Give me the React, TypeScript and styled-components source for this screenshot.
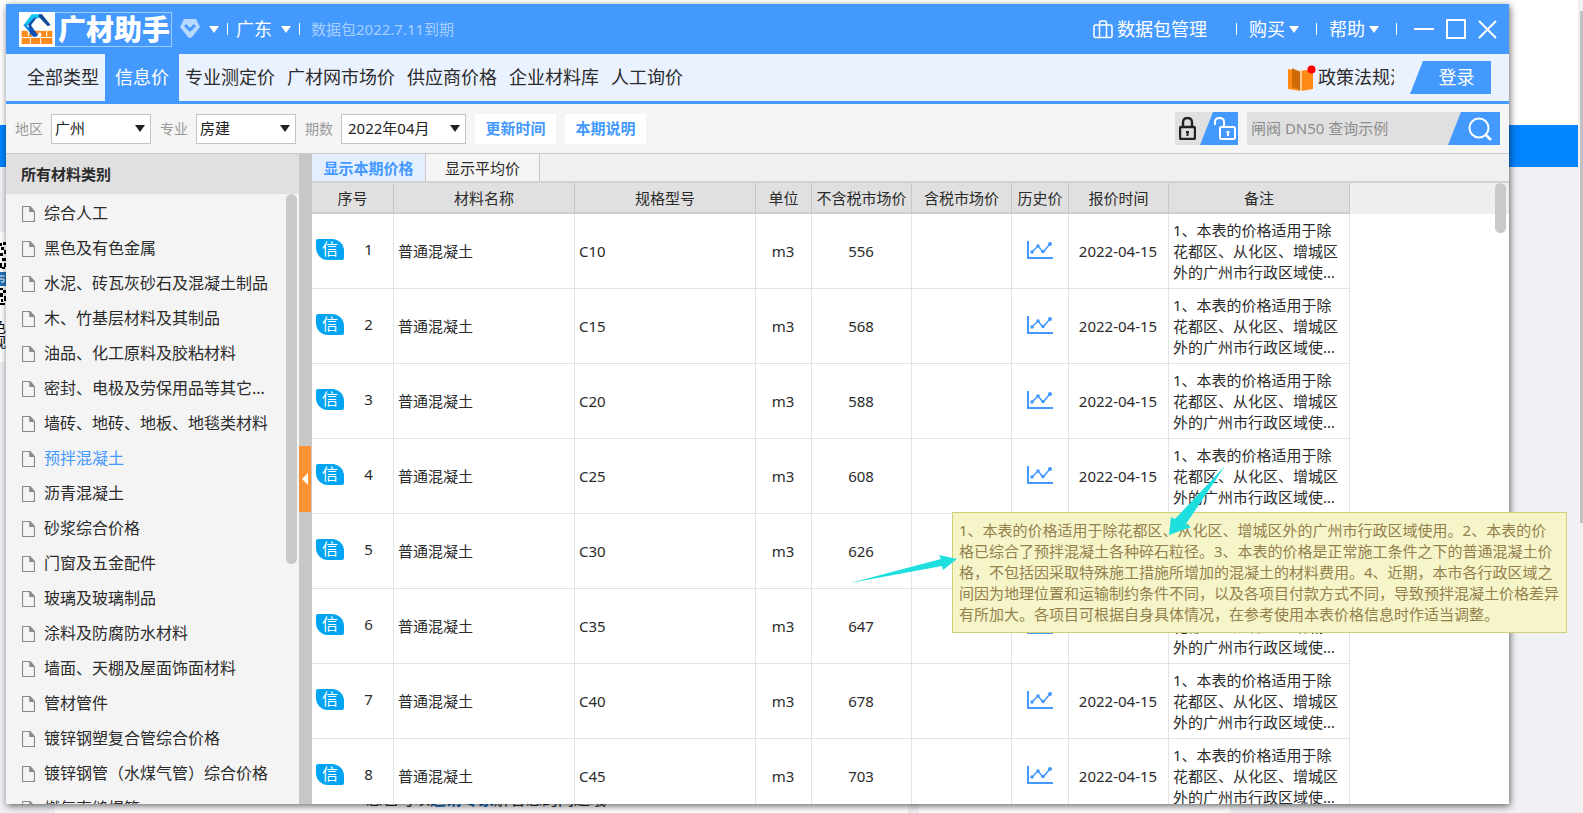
import React from "react";
import styled, { createGlobalStyle, css } from "styled-components";

const BLUE = "#4499ff";

const GlobalStyle = createGlobalStyle`
  *, *::before, *::after { box-sizing: border-box; }
  body {
    margin: 0;
    font-family: "Noto Sans", "Noto Sans CJK SC", sans-serif;
    font-size: 15px;
    line-height: 21px;
    color: #2b2b2b;
    background: #eff1f4;
  }
  button, input, select { font: inherit; color: inherit; margin: 0; border: 0; padding: 0; border-radius: 0; background: none; }
  button { cursor: pointer; white-space: nowrap; }
`;

const Page = styled.div`
  position: relative;
  height: 100vh;
  padding: 4px 74px 9px 6px;
  overflow: hidden;
`;

/* ---------- web page behind the window ---------- */

const Backdrop = styled.div`
  position: absolute;
  inset: 0;
  display: flex;
  flex-direction: column;
`;

const BackTop = styled.div`
  flex: 0 0 125px;
  background: #fff;
`;

const BackBand = styled.div`
  flex: 0 0 42px;
  background: #0084ff;
`;

const BackBody = styled.div`
  flex: 1;
  display: flex;
  flex-direction: column;
  justify-content: space-between;
  padding-top: 65px;
`;

const QrCard = styled.div`
  width: 60px;
  height: 130px;
  background: #fff;
  svg { display: block; }
`;

const QrCaption = styled.div`
  width: 6px;
  overflow: hidden;
  display: flex;
  flex-direction: column;
  align-items: flex-end;
  font-size: 14px;
  line-height: 15px;
  padding-top: 6px;
  color: #000;
`;

const BackCards = styled.div`
  display: flex;
  gap: 11px;
  height: 24px;
  padding-left: 55px;
`;

const BackCard = styled.p<{ $width: number }>`
  width: ${(p) => p.$width}px;
  margin: 0;
  padding-left: 311px;
  background: #fff;
  font-size: 16px;
  line-height: 20px;
  white-space: nowrap;
  a { color: #0a66c2; font-weight: 700; text-decoration: none; }
`;

const BackScroll = styled.div`
  position: absolute;
  inset: 0 0 0 auto;
  width: 5px;
  padding: 11px 0 0 2px;
  background: #f1f1f1;
  &::before { content: ""; display: block; height: 512px; background: #c1c1c1; }
`;

/* ---------- window ---------- */

const Window = styled.div`
  position: relative;
  display: flex;
  flex-direction: column;
  height: 100%;
  background: #fff;
  box-shadow: 1px 2px 7px rgba(0, 0, 0, 0.6);
`;

const TitleBar = styled.header`
  flex: 0 0 50px;
  display: flex;
  align-items: center;
  justify-content: space-between;
  padding: 0 12px 0 13px;
  background: ${BLUE};
  color: #fff;
  font-size: 18px;
`;

const BarGroup = styled.div<{ $gap: number }>`
  display: flex;
  align-items: center;
  gap: ${(p) => p.$gap}px;
`;

const Brand = styled.h1`
  display: flex;
  align-items: center;
  height: 35px;
  margin: 0;
  padding-right: 1px;
  border: 1px solid #9fcbff;
  font-size: 28px;
  line-height: 32px;
  font-weight: 900;
  svg { display: block; margin: -1px 3px -1px -1px; }
`;

const BarButton = styled.button<{ $menu?: number }>`
  display: flex;
  align-items: center;
  gap: ${(p) => p.$menu ?? 4}px;
`;

const RightMenu = styled(BarButton)`
  padding-right: 5px;
`;

const WindowButtons = styled.div`
  display: flex;
  align-items: center;
  gap: 12px;
  padding-left: 5px;
`;

const Divider = styled.span`
  width: 1px;
  height: 12px;
  background: #fff;
`;

const Expiry = styled.span`
  padding-left: 3px;
  font-size: 15px;
  color: #a6cfff;
`;

const NavBar = styled.nav`
  flex: 0 0 50px;
  display: flex;
  align-items: stretch;
  padding: 0 18px 0 15px;
  background: #ebf2ff;
  border-bottom: 3px solid ${BLUE};
  font-size: 18px;
`;

const NavItem = styled.button<{ $active?: boolean }>`
  padding: 0 6px;
  ${(p) =>
    p.$active &&
    css`
      padding: 0 10px;
      background: ${BLUE};
      color: #fff;
    `}
`;

const Policy = styled.a`
  display: flex;
  align-items: center;
  gap: 2px;
  width: 106px;
  margin: 0 16px 0 auto;
  overflow: hidden;
  white-space: nowrap;
  color: inherit;
  text-decoration: none;
  svg { flex: none; }
`;

const LoginButton = styled.button`
  align-self: center;
  width: 81px;
  height: 33px;
  padding-left: 12px;
  background: ${BLUE};
  color: #fff;
  clip-path: polygon(13px 0, 100% 0, 100% 100%, 0 100%);
`;

const FilterBar = styled.div`
  flex: 0 0 50px;
  display: flex;
  align-items: center;
  gap: 9px;
  padding: 0 9px;
  background: #f5f5f5;
  border-bottom: 1px solid #c8c8c8;
`;

const Field = styled.label`
  display: flex;
  align-items: center;
  gap: 8px;
  font-size: 14px;
  color: #999;
`;

const SelectBox = styled.span<{ $width: number }>`
  position: relative;
  width: ${(p) => p.$width}px;
  select {
    appearance: none;
    display: block;
    width: 100%;
    height: 30px;
    padding-left: ${(p) => (p.$width > 100 ? 6 : 3)}px;
    border: 1px solid #c4c4c4;
    background: #fff;
    font-size: 15px;
    color: #222;
  }
  svg { position: absolute; right: 6px; top: 11px; pointer-events: none; }
`;

const LinkButton = styled.button`
  width: 81px;
  height: 30px;
  background: #fff;
  color: ${BLUE};
  font-weight: 700;
`;

const LockSwitch = styled.div`
  display: flex;
  justify-content: space-between;
  width: 63px;
  height: 33px;
  margin-left: auto;
  background: #e0e0e0;
`;

const LockButton = styled.button<{ $on?: boolean }>`
  display: flex;
  align-items: center;
  justify-content: center;
  width: ${(p) => (p.$on ? 38 : 25)}px;
  ${(p) =>
    p.$on &&
    css`
      justify-content: flex-end;
      padding-right: 2px;
      background: ${BLUE};
      clip-path: polygon(13px 0, 100% 0, 100% 100%, 0 100%);
    `}
`;

const SearchBox = styled.form`
  display: flex;
  width: 253px;
  height: 33px;
  background: #e0e0e0;
  input {
    flex: 1;
    min-width: 0;
    padding-left: 4px;
    &::placeholder { color: #8c8c8c; opacity: 1; }
  }
`;

const SearchButton = styled.button`
  display: flex;
  align-items: center;
  justify-content: center;
  width: 52px;
  padding-left: 12px;
  background: ${BLUE};
  clip-path: polygon(13px 0, 100% 0, 100% 100%, 0 100%);
`;

const Body = styled.div`
  flex: 1;
  min-height: 0;
  display: flex;
`;

const Sidebar = styled.aside`
  position: relative;
  flex: 0 0 293px;
  overflow: hidden;
  background: #f4f4f4;
`;

const SidebarTitle = styled.h2`
  margin: 0;
  height: 40px;
  padding: 10px 0 0 15px;
  background: #e0e0e0;
  font-size: 15px;
  line-height: 21px;
  font-weight: 700;
`;

const CategoryList = styled.ul`
  margin: 0;
  padding: 2px 0 0;
  list-style: none;
`;

const Category = styled.button<{ $active?: boolean }>`
  display: flex;
  align-items: center;
  gap: 9px;
  width: 100%;
  height: 35px;
  padding-left: 16px;
  font-size: 16px;
  color: ${(p) => (p.$active ? BLUE : "#2b2b2b")};
`;

const ScrollThumb = styled.div<{ $height: number; $top: number; $right: number }>`
  position: absolute;
  top: ${(p) => p.$top}px;
  right: ${(p) => p.$right}px;
  width: 11px;
  height: ${(p) => p.$height}px;
  border-radius: 6px;
  background: #c9c9c9;
`;

const Splitter = styled.div`
  flex: 0 0 13px;
  display: flex;
  align-items: center;
  background: #c8c7c5;
`;

const CollapseButton = styled.button`
  display: flex;
  align-items: center;
  justify-content: center;
  width: 12px;
  height: 66px;
  background: #ff9233;
`;

const Main = styled.main`
  position: relative;
  flex: 1;
  min-width: 0;
  overflow: hidden;
`;

const Tabs = styled.div`
  display: flex;
  height: 29px;
  background: #f0f0f0;
  border-bottom: 2px solid #d2d2d2;
`;

const Tab = styled.button<{ $active?: boolean }>`
  width: 114px;
  padding-top: 2px;
  border-right: 1px solid #c8c8c8;
  background: ${(p) => (p.$active ? "#e3efff" : "#f5f5f5")};
  color: ${(p) => (p.$active ? BLUE : "inherit")};
  font-weight: ${(p) => (p.$active ? 700 : 400)};
`;

const PriceTable = styled.table`
  width: 100%;
  table-layout: fixed;
  border-collapse: separate;
  border-spacing: 0;
`;

const HeadCell = styled.th<{ $width?: number }>`
  width: ${(p) => (p.$width ? `${p.$width}px` : "auto")};
  height: 31px;
  padding: 2px 0 0;
  font-weight: 400;
  white-space: nowrap;
  background: ${(p) => (p.$width ? "#e0e0e0" : "#efefef")};
  ${(p) =>
    p.$width &&
    css`
      border-right: 1px solid #c6c6c6;
      border-bottom: 2px solid #cfcfcf;
    `}
`;

const Cell = styled.td<{ $center?: boolean }>`
  height: 75px;
  padding: 0 5px 0 4px;
  text-align: ${(p) => (p.$center ? "center" : "left")};
  border-right: 1px solid #e4e4e4;
  border-bottom: 1px solid #e2e2e2;
  white-space: ${(p) => (p.$center ? "nowrap" : "normal")};
  > svg { display: block; margin: 0 auto; }
`;

const IndexCell = styled(Cell)`
  padding: 0 0 3px 4px;
`;

const FillerCell = styled.td`
  padding: 0;
`;

const IndexBox = styled.div`
  display: flex;
  align-items: center;
  text-align: center;
  span { flex: 1; }
`;

const Badge = styled.b`
  width: 28px;
  height: 21px;
  border-radius: 2px 12px 2px 12px;
  background: #00a4f0;
  color: #fff;
  font-size: 16px;
  font-weight: 400;
`;

const Note = styled.div`
  display: -webkit-box;
  -webkit-box-orient: vertical;
  -webkit-line-clamp: 3;
  overflow: hidden;
`;

const Tooltip = styled.div`
  position: absolute;
  left: 952px;
  top: 512px;
  width: 615px;
  padding: 7px 0 7px 6px;
  border: 1px solid #cfcf74;
  background: #f5f5c9;
  color: #94804c;
  white-space: pre;
`;

const Pointers = styled.svg`
  position: absolute;
  left: 0;
  top: 0;
  pointer-events: none;
`;

/* ---------- icons ---------- */

const Caret = ({ color = "#fff" }: { color?: string }) => (
  <svg width="10" height="7" viewBox="0 0 10 7" aria-hidden="true">
    <path d="M0 0h10L5 7z" fill={color} />
  </svg>
);

const LogoMark = () => (
  <svg width="36" height="35" viewBox="0 0 108 105" aria-hidden="true">
    <path d="M0 0h108v105H0z" fill="#fff" />
    <path d="M8 56h92v19H8zM8 78h92v18H8z" fill="#ff8a1c" />
    <path d="M34 78v18M65 78v18M83 57v18M28 56v18" stroke="#fff" strokeWidth="3" />
    <path d="M24 38L52 70l14-12-10-12 20 0 2 9-14 21H42L12 44z" fill="#fff" />
    <path d="M62 57h18L69 71z" fill="#ff8a1c" />
    <path d="M38 7h30l-8 12H44L28 38l-15 2z" fill="#12c4f0" />
    <path d="M13 39l15-2 9-12 11-9-24 26 34 27-6 5H43z" fill="#1787e8" />
    <path d="M28 37l16-18 10-3-18 24 20 29-8 5-14-6z" fill="#0d4fae" />
    <path d="M60 7h9l26 32-9 4-27-29z" fill="#124a98" />
  </svg>
);

const GemIcon = () => (
  <svg width="20" height="20" viewBox="0 0 20 20" aria-hidden="true">
    <path d="M4 0h12l4 8-8 10q-2 2-4 0L0 8z" fill="#b9d9ff" />
    <path d="M5 6l5 5 5-5" fill="none" stroke={BLUE} strokeWidth="3" />
  </svg>
);

const CaseIcon = () => (
  <svg width="20" height="19" viewBox="0 0 20 19" fill="none" stroke="#fff" strokeWidth="1.5" aria-hidden="true">
    <rect x="1" y="5" width="18" height="12.5" rx="1.5" />
    <path d="M6.5 17.5V3q0-2 2-2h3q2 0 2 2v14.5" />
  </svg>
);

const BookIcon = () => (
  <svg width="28" height="26" viewBox="0 0 28 26" aria-hidden="true">
    <path d="M0 4l12 2 13-2v20l-12 2-13-2z" fill="#ff8a14" />
    <path d="M4 3l8 4v18l-8-3z" fill="#cf6a08" />
    <path d="M13 6v20" stroke="#ffe0b8" strokeWidth="1.5" />
    <circle cx="23.5" cy="4.5" r="4" fill="#f00" />
  </svg>
);

const LockIcon = ({ open, color }: { open?: boolean; color: string }) => (
  <svg width={open ? 22 : 17} height="23" viewBox={open ? "0 0 22 23" : "0 0 17 23"} fill="none" stroke={color} strokeWidth="2" aria-hidden="true">
    {open ? (
      <>
        <path d="M1 8V5q0-4 4.500-4T10 5v5" />
        <rect x="6" y="10" width="15" height="12" rx="1.5" />
        <path d="M14 14v5M12.500 15h3" />
      </>
    ) : (
      <>
        <path d="M4 10V5.500q0-4.500 4.500-4.500T13 5.500V10" strokeWidth="2.4" />
        <rect x="1" y="10" width="15" height="12" rx="1.5" strokeWidth="2.4" />
        <path d="M8.500 14v5M7 15h3" />
      </>
    )}
  </svg>
);

const SearchIcon = () => (
  <svg width="24" height="24" viewBox="0 0 24 24" fill="none" stroke="#fff" strokeWidth="2" aria-hidden="true">
    <circle cx="11" cy="11" r="9.5" />
    <path d="M18 18l5 5" strokeWidth="2.5" />
  </svg>
);

const MinimizeIcon = () => (
  <svg width="20" height="20" viewBox="0 0 20 20" stroke="#fff" strokeWidth="2" aria-hidden="true">
    <path d="M0 10h20" />
  </svg>
);

const MaximizeIcon = () => (
  <svg width="20" height="20" viewBox="0 0 20 20" fill="none" stroke="#fff" strokeWidth="2" aria-hidden="true">
    <rect x="1" y="1" width="18" height="18" />
  </svg>
);

const CloseIcon = () => (
  <svg width="19" height="19" viewBox="0 0 19 19" stroke="#fff" strokeWidth="2" aria-hidden="true">
    <path d="M1 1l17 17M18 1L1 18" />
  </svg>
);

const FileIcon = () => (
  <svg width="13" height="16" viewBox="0 0 13 16" fill="none" stroke="#8a8a8a" aria-hidden="true">
    <path d="M.5.5h7.500l4.500 5v10H.5zM8 .5v5h4.500" strokeWidth="1.2" />
    <path d="M8 1l4 4.500H8z" fill="#8a8a8a" />
  </svg>
);

const ChartIcon = () => (
  <svg width="26" height="20" viewBox="0 0 26 20" fill="none" stroke={BLUE} aria-hidden="true">
    <path d="M1 0v17h25" strokeWidth="2" />
    <path d="M5 11l6-6 5 6 7-8" strokeWidth="1.5" />
    <g fill={BLUE} stroke="none">
      <circle cx="5" cy="11" r="1.8" />
      <circle cx="11" cy="5" r="1.8" />
      <circle cx="16" cy="10.5" r="1.8" />
      <circle cx="23" cy="3" r="2" />
    </g>
  </svg>
);

const QrEdge = () => (
  <svg width="6" height="81" viewBox="0 0 6 81" aria-hidden="true">
    <path d="M0 11h2v3H0zM3 10h3v3H3zM1 15h3v3H1zM4 18h2v4H4zM0 21h3v3H0zM2 26h4v3H2zM0 31h2v5H0zM4 31h2v4H4zM2 35h3v2H2zM0 56h3v2H0zM3 58h3v3H3zM0 61h3v4H0zM4 64h2v5H4zM1 67h2v3H1zM0 71h5v2H0z" fill="#000" />
    <path d="M0 40h6v14H0z" fill="#1f6fb8" />
    <path d="M0 44h5M1 50h3v-3H0" stroke="#fff" fill="none" />
  </svg>
);

/* ---------- data ---------- */

const NAV = ["全部类型", "信息价", "专业测定价", "广材网市场价", "供应商价格", "企业材料库", "人工询价"];

const CATEGORIES = [
  "综合人工",
  "黑色及有色金属",
  "水泥、砖瓦灰砂石及混凝土制品",
  "木、竹基层材料及其制品",
  "油品、化工原料及胶粘材料",
  "密封、电极及劳保用品等其它...",
  "墙砖、地砖、地板、地毯类材料",
  "预拌混凝土",
  "沥青混凝土",
  "砂浆综合价格",
  "门窗及五金配件",
  "玻璃及玻璃制品",
  "涂料及防腐防水材料",
  "墙面、天棚及屋面饰面材料",
  "管材管件",
  "镀锌钢塑复合管综合价格",
  "镀锌钢管（水煤气管）综合价格",
  "燃气直缝焊管",
];

const COLUMNS: [string, number][] = [
  ["序号", 82],
  ["材料名称", 181],
  ["规格型号", 181],
  ["单位", 56],
  ["不含税市场价", 100],
  ["含税市场价", 100],
  ["历史价", 57],
  ["报价时间", 100],
  ["备注", 181],
];

const ROWS: [string, number][] = [
  ["C10", 556],
  ["C15", 568],
  ["C20", 588],
  ["C25", 608],
  ["C30", 626],
  ["C35", 647],
  ["C40", 678],
  ["C45", 703],
];

const NOTE_LINES = [
  "1、本表的价格适用于除花都区、从化区、增城区外的广州市行政区域使用。2、本表的价",
  "格已综合了预拌混凝土各种碎石粒径。3、本表的价格是正常施工条件之下的普通混凝土价",
  "格，不包括因采取特殊施工措施所增加的混凝土的材料费用。4、近期，本市各行政区域之",
  "间因为地理位置和运输制约条件不同，以及各项目付款方式不同，导致预拌混凝土价格差异",
  "有所加大。各项目可根据自身具体情况，在参考使用本表价格信息时作适当调整。",
];

const FILTERS: [string, string, number][] = [
  ["地区", "广州", 100],
  ["专业", "房建", 100],
  ["期数", "2022年04月", 125],
];

/* ---------- page ---------- */

export default function App() {
  return (
    <Page>
      <GlobalStyle />
      <Backdrop>
        <BackTop />
        <BackBand />
        <BackBody>
          <QrCard>
            <QrEdge />
            <QrCaption>
              <span>色</span>
              <span>视</span>
            </QrCaption>
          </QrCard>
          <BackCards>
            <BackCard $width={853}>
              您也可以<a href="#expert">邀请专家</a>解答您的问题哦
            </BackCard>
            <BackCard $width={278} />
          </BackCards>
        </BackBody>
        <BackScroll />
      </Backdrop>

      <Window>
        <TitleBar>
          <BarGroup $gap={8}>
            <Brand>
              <LogoMark />
              广材助手
            </Brand>
            <BarButton $menu={9} aria-label="会员">
              <GemIcon />
              <Caret />
            </BarButton>
            <Divider />
            <BarButton $menu={9}>
              广东
              <Caret />
            </BarButton>
            <Divider />
            <Expiry>数据包2022.7.11到期</Expiry>
          </BarGroup>
          <BarGroup $gap={12}>
            <RightMenu>
              <CaseIcon />
              数据包管理
            </RightMenu>
            <span />
            <Divider />
            <RightMenu>
              购买
              <Caret />
            </RightMenu>
            <Divider />
            <RightMenu>
              帮助
              <Caret />
            </RightMenu>
            <Divider />
            <WindowButtons>
              <BarButton aria-label="最小化">
                <MinimizeIcon />
              </BarButton>
              <BarButton aria-label="最大化">
                <MaximizeIcon />
              </BarButton>
              <BarButton aria-label="关闭">
                <CloseIcon />
              </BarButton>
            </WindowButtons>
          </BarGroup>
        </TitleBar>

        <NavBar>
          {NAV.map((name, i) => (
            <NavItem key={name} $active={i === 1}>
              {name}
            </NavItem>
          ))}
          <Policy href="#policy">
            <BookIcon />
            政策法规汇编
          </Policy>
          <LoginButton>登录</LoginButton>
        </NavBar>

        <FilterBar>
          {FILTERS.map(([label, value, width]) => (
            <Field key={label}>
              {label}
              <SelectBox $width={width}>
                <select defaultValue={value}>
                  <option>{value}</option>
                </select>
                <Caret color="#222" />
              </SelectBox>
            </Field>
          ))}
          <LinkButton>更新时间</LinkButton>
          <LinkButton>本期说明</LinkButton>
          <LockSwitch>
            <LockButton aria-label="锁定">
              <LockIcon color="#222" />
            </LockButton>
            <LockButton $on aria-label="解锁">
              <LockIcon open color="#fff" />
            </LockButton>
          </LockSwitch>
          <SearchBox onSubmit={(e) => e.preventDefault()}>
            <input type="text" aria-label="查询" placeholder="闸阀 DN50 查询示例" />
            <SearchButton aria-label="搜索">
              <SearchIcon />
            </SearchButton>
          </SearchBox>
        </FilterBar>

        <Body>
          <Sidebar>
            <SidebarTitle>所有材料类别</SidebarTitle>
            <CategoryList>
              {CATEGORIES.map((name) => (
                <li key={name}>
                  <Category $active={name === "预拌混凝土"}>
                    <FileIcon />
                    {name}
                  </Category>
                </li>
              ))}
            </CategoryList>
            <ScrollThumb $top={40} $right={2} $height={370} />
          </Sidebar>
          <Splitter>
            <CollapseButton aria-label="收起">
              <svg width="6" height="12" viewBox="0 0 6 12" aria-hidden="true">
                <path d="M6 0v12L0 6z" fill="#fff" />
              </svg>
            </CollapseButton>
          </Splitter>
          <Main>
            <Tabs>
              <Tab $active>显示本期价格</Tab>
              <Tab>显示平均价</Tab>
            </Tabs>
            <PriceTable>
              <thead>
                <tr>
                  {COLUMNS.map(([name, width]) => (
                    <HeadCell key={name} $width={width} scope="col">
                      {name}
                    </HeadCell>
                  ))}
                  <HeadCell aria-hidden="true" />
                </tr>
              </thead>
              <tbody>
                {ROWS.map(([spec, price], i) => (
                  <tr key={spec}>
                    <IndexCell>
                      <IndexBox>
                        <Badge>信</Badge>
                        <span>{i + 1}</span>
                      </IndexBox>
                    </IndexCell>
                    <Cell>普通混凝土</Cell>
                    <Cell>{spec}</Cell>
                    <Cell $center>m3</Cell>
                    <Cell $center>{price}</Cell>
                    <Cell />
                    <Cell $center>
                      <ChartIcon />
                    </Cell>
                    <Cell $center>2022-04-15</Cell>
                    <Cell>
                      <Note>{NOTE_LINES.join("")}</Note>
                    </Cell>
                    <FillerCell />
                  </tr>
                ))}
              </tbody>
            </PriceTable>
            <ScrollThumb $top={29} $right={3} $height={50} />
          </Main>
        </Body>
      </Window>

      <Tooltip role="tooltip">{NOTE_LINES.join("\n")}</Tooltip>
      <Pointers width="1583" height="813" viewBox="0 0 1583 813" fill="#1fdede" aria-hidden="true">
        <path d="M850 583L941 559 939 555 957 559 943 570 942 566z" />
        <path d="M1225 466L1175 519 1171 517 1169 535 1191 527 1186 524z" />
      </Pointers>
    </Page>
  );
}
